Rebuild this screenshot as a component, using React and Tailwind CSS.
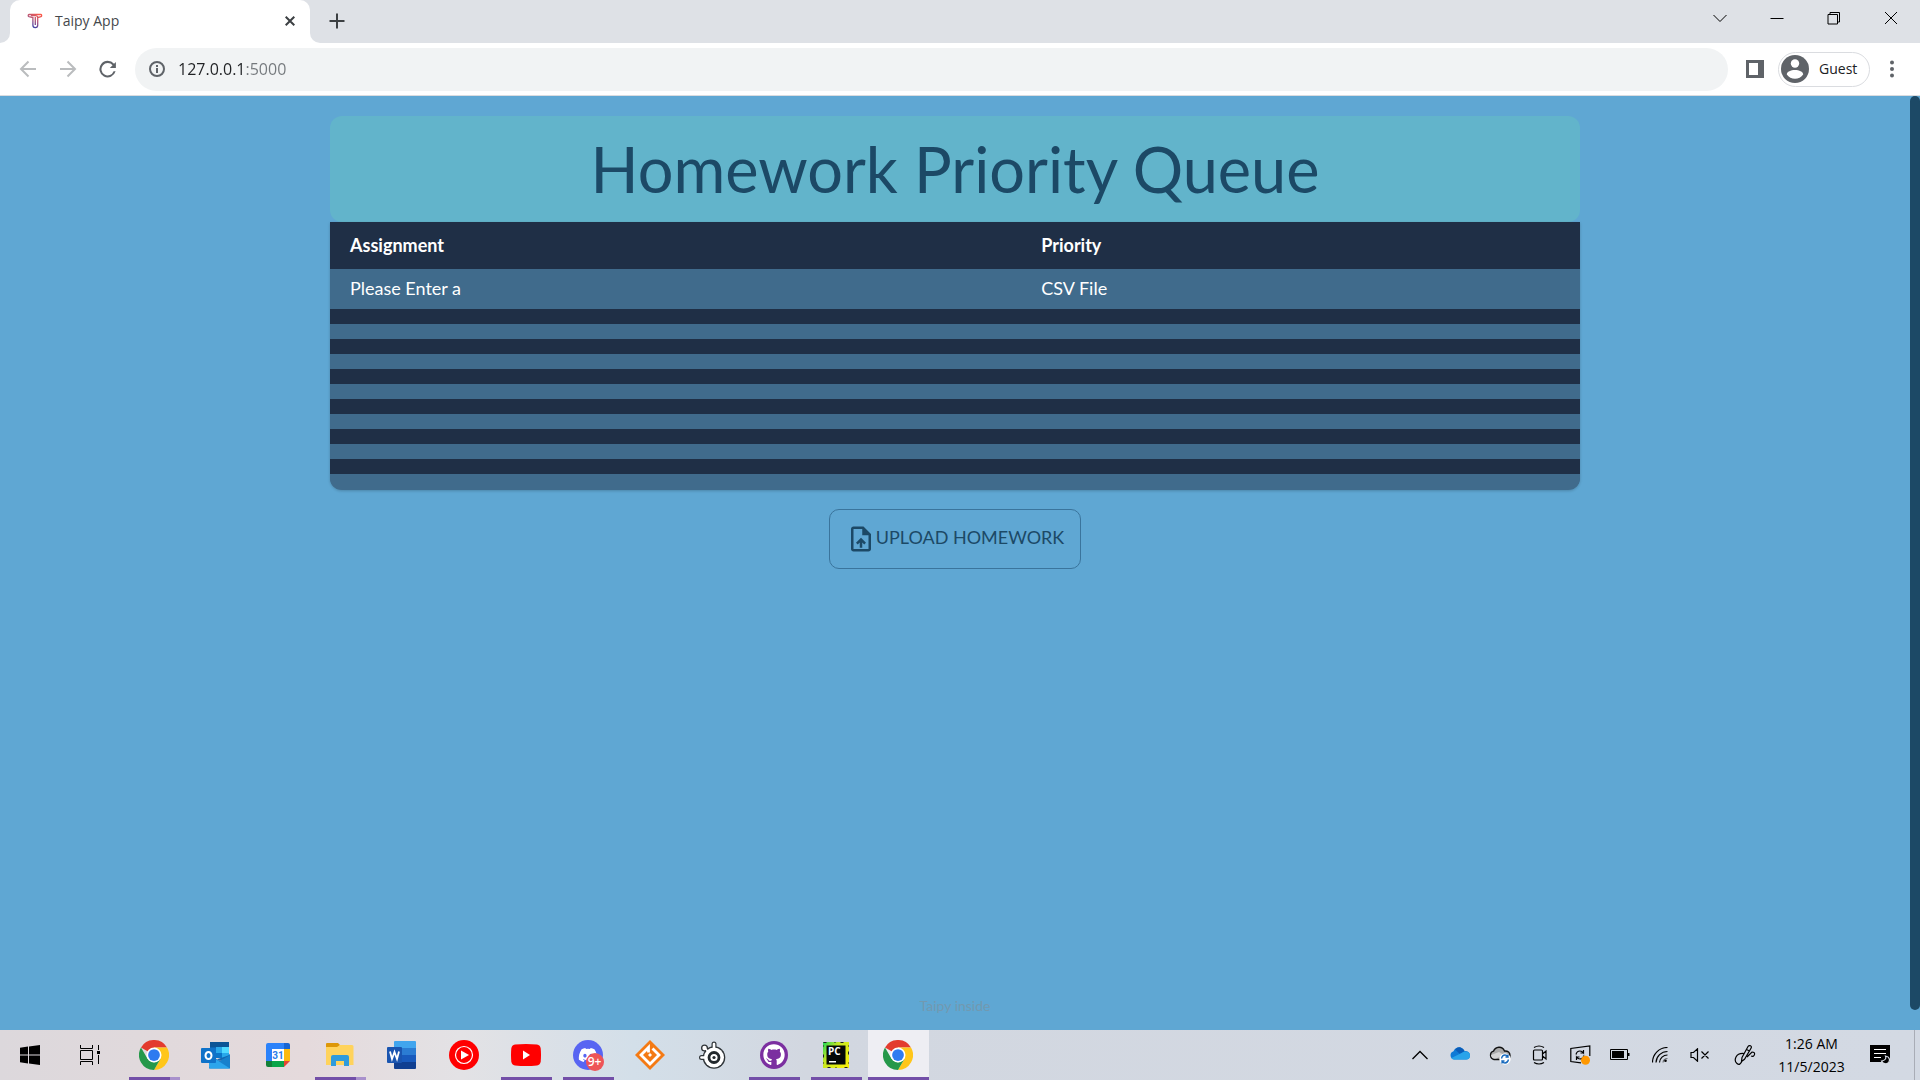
import React from "react";
import { FaGithub, FaDiscord } from "react-icons/fa";

/* ---------- browser icons ---------- */

const TaipyLogo = () => (
  <svg width="16" height="16" viewBox="0 0 16 16" fill="none">
    <defs>
      <linearGradient id="taipy" x1="13" y1="1" x2="5" y2="15" gradientUnits="userSpaceOnUse">
        <stop stopColor="#ff5a48" />
        <stop offset="0.5" stopColor="#b0557a" />
        <stop offset="1" stopColor="#283eb0" />
      </linearGradient>
    </defs>
    <path
      d="M2 1.500h12c.9 0 .9 2 0 2.200l-3.300.9v7.600c0 3.100-4.800 3.100-4.800 0V4.600L2 3.700c-1.100-.300-1-2.200 0-2.200Z"
      stroke="url(#taipy)"
      strokeWidth="1.300"
    />
    <path d="M8.300 4v8M4 2.700h4.500q2.200 0 2.200 2" stroke="url(#taipy)" strokeWidth="1.300" />
  </svg>
);

const Line = ({ size = 14, w = 1, d, className = "" }) => (
  <svg width={size} height={size} viewBox={`0 0 ${size} ${size}`} fill="none" stroke="currentColor" strokeWidth={w} className={className}>
    <path d={d} />
  </svg>
);

const Reload = () => (
  <svg width="22" height="22" viewBox="0 0 24 24" fill="#5f6368">
    <path d="M18.600 6.400A9 9 0 1 0 20.300 14.500h-2.200a6.800 6.800 0 1 1-1.100-6.500l-3 3h6.600V4.300z" />
  </svg>
);

const Info = () => (
  <svg width="18" height="18" viewBox="0 0 18 18" fill="none" stroke="#5f6368" strokeWidth="2">
    <circle cx="9" cy="9" r="7" />
    <path d="M9 8v5M9 5v2" />
  </svg>
);

const GuestAvatar = () => (
  <svg width="28" height="28" viewBox="0 0 28 28">
    <circle cx="14" cy="14" r="14" fill="#5f6368" />
    <circle cx="14" cy="8.500" r="4.200" fill="#fff" />
    <path d="M5.800 19.500c0-6 16.400-6 16.400 0-3.600 5.700-12.800 5.700-16.400 0Z" fill="#fff" />
  </svg>
);

const UploadFile = () => (
  <svg width="30" height="30" viewBox="0 0 24 24" fill="currentColor">
    <path d="M14 2H6c-1.100 0-1.990.9-1.990 2L4 20c0 1.100.890 2 1.990 2H18c1.100 0 2-.9 2-2V8l-6-6zm4 18H6V4h7v5h5v11zM8 15.010l1.410 1.410L11 14.840V19h2v-4.160l1.590 1.590L16 15.010 12.010 11z" />
  </svg>
);

/* ---------- taskbar icons ---------- */

const WindowsLogo = () => (
  <svg width="20" height="20" viewBox="0 0 20 20">
    <path d="M0 2.800 8 1.600V9.500H0zM9 1.400 20 0v9.500H9zM0 10.500h8v7.900L0 17.200zM9 10.500h11V20L9 18.600z" />
  </svg>
);

const TaskView = () => (
  <svg width="20" height="20" viewBox="0 0 20 20" fill="none" stroke="#000" strokeWidth="1">
    <path d="M.5 5.500h12v9H.5zM.5 0v3.500h12V0M.5 20v-3.500h12V20M18.500 0v5M18.500 10v9" />
    <path d="M17 6h3v3h-3z" fill="#000" stroke="none" />
  </svg>
);

const Chrome = () => (
  <svg width="30" height="30" viewBox="0 0 48 48">
    <path d="M24 24 3.200 12A24 24 0 0 1 44.800 12H24z" fill="#e33b2e" />
    <path d="M24 12h20.800A24 24 0 0 1 24 48L34.400 30z" fill="#ffc61a" />
    <path d="M3.200 12A24 24 0 0 0 24 48L34.400 30 24 36 13.600 30z" fill="#25984a" />
    <circle cx="24" cy="24" r="12" fill="#fff" />
    <circle cx="24" cy="24" r="9.400" fill="#2e7bf0" />
  </svg>
);

const Outlook = () => (
  <svg width="30" height="30" viewBox="0 0 30 30">
    <path d="M9 2h19v12H9z" fill="#0a64b4" />
    <path d="M9 2h19v5H9z" fill="#0b5496" />
    <path d="M15 7h6v6h-6z" fill="#28a8ea" />
    <path d="M21 7h7v6h-7z" fill="#50d9ff" />
    <path d="M15 13h6v5h-6z" fill="#0a74c8" />
    <path d="M21 13h7v4l-7 3z" fill="#28a8ea" />
    <path d="M29 14v14.500H8V15l11 6z" fill="#1780cc" />
    <path d="M8 15v12l1 1.500h20z" fill="#2ba5ec" />
    <path d="m29 15-10 6-3-1.700z" fill="#1266b0" />
    <rect y="8" width="15" height="15" rx="1" fill="#0f72c9" />
    <ellipse cx="7.500" cy="15.500" rx="3" ry="3.500" fill="none" stroke="#fff" strokeWidth="2" />
  </svg>
);

const Calendar = () => (
  <svg width="24" height="24" viewBox="0 0 24 24">
    <path d="M2 0h16v6H6v12H0V2Q0 0 2 0z" fill="#2b82fa" />
    <path d="M18 0h4q2 0 2 2v4h-6z" fill="#1765d3" />
    <path d="M18 6h6v12h-6z" fill="#fdba0c" />
    <path d="M6 18h12v6H6z" fill="#0aa549" />
    <path d="M0 18h6v6H2q-2 0-2-2z" fill="#138038" />
    <path d="M18 18h6l-6 6z" fill="#e64534" />
    <path d="M6 6h12v12H6z" fill="#fff" />
    <text x="12" y="15.500" textAnchor="middle" fontSize="10" fontWeight="700" fontFamily="Roboto, sans-serif" fill="#2b7de9">31</text>
  </svg>
);

const Explorer = () => (
  <svg width="28" height="24" viewBox="0 0 28 24">
    <path d="M0 1q0-1 1-1h11l2 2-2 3H0z" fill="#dd9708" />
    <path d="M0 4h11l3-2h12q1.500 0 1.500 1.500V22H0z" fill="#ffd35c" />
    <path d="M5 23V14q0-2 2-2h14q2 0 2 2v9h-5v-5h-8v5z" fill="#2f9bdc" />
  </svg>
);

const Word = () => (
  <svg width="30" height="28" viewBox="0 0 30 28">
    <path d="M7 7V1q0-1 1-1h20q1 0 1 1v6z" fill="#41a5ee" />
    <path d="M7 7h22v7H7z" fill="#2b7cd3" />
    <path d="M7 14h22v7H7z" fill="#185abd" />
    <path d="M7 21h22v6q0 1-1 1H8q-1 0-1-1z" fill="#103f91" />
    <rect y="6" width="15" height="16" rx="1" fill="#1a55b0" />
    <path d="m3 10.500 2 7.500 2.500-7 2.500 7 2-7.500" fill="none" stroke="#fff" strokeWidth="1.800" />
  </svg>
);

const YTMusic = () => (
  <svg width="30" height="30" viewBox="0 0 30 30">
    <circle cx="15" cy="15" r="15" fill="#f00" />
    <circle cx="15" cy="15" r="8.500" fill="none" stroke="#fff" strokeWidth="1.200" />
    <path d="m12 10.500 8 4.500-8 4.500z" fill="#fff" />
  </svg>
);

const YouTube = () => (
  <svg width="30" height="22" viewBox="0 0 30 22">
    <path d="M4 .6Q15-.4 26 .6q3.300.4 3.700 4 .6 6.400 0 12.800-.4 3.600-3.700 4-11 1-22 0-3.300-.4-3.700-4-.6-6.400 0-12.800Q.7 1 4 .6z" fill="#f00" />
    <path d="m12 6.500 7 4.500-7 4.500z" fill="#fff" />
  </svg>
);

const Discord = () => (
  <span className="relative flex h-[30px] w-[30px] items-center justify-center rounded-full bg-[#5865f2] text-white">
    <FaDiscord size={20} />
    <span className="absolute -right-px -bottom-px flex h-[18px] w-[18px] items-center justify-center rounded-full bg-[#ee5458] font-['Open_Sans',sans-serif] text-[12px] font-semibold">
      9+
    </span>
  </span>
);

const OrangeDiamond = () => (
  <svg width="30" height="30" viewBox="0 0 30 30" fill="none">
    <path d="M15 0 30 15 15 30 0 15z" fill="#f47a14" />
    <path d="M17.500 8.500 24 15 15 24 6 15 13.500 7.500v5" stroke="#fff" strokeWidth="2.800" />
    <path d="m15 13 2 2-2 2-2-2z" fill="#fff" />
  </svg>
);

const SteelSeries = () => (
  <svg width="28" height="28" viewBox="0 0 28 28">
    <g fill="#2f3438" stroke="#2f3438" strokeLinecap="round">
      <circle cx="16" cy="16.500" r="11.300" stroke="none" />
      <circle cx="6.500" cy="7" r="3.500" stroke="none" />
      <path d="M16 8V3" strokeWidth="5" />
      <path d="M7 16.500H3.500" strokeWidth="5" />
      <path d="m7 7 3 3.500" strokeWidth="4" />
    </g>
    <g fill="#fff" stroke="#fff" strokeLinecap="round">
      <circle cx="16" cy="16.500" r="10" stroke="none" />
      <circle cx="6.500" cy="7" r="2.200" stroke="none" />
      <path d="M16 8V3" strokeWidth="2.600" />
      <path d="M7 16.500H3.500" strokeWidth="2.600" />
      <path d="m7 7 3 3.500" strokeWidth="1.600" />
    </g>
    <circle cx="16" cy="16.500" r="5" fill="#fff" stroke="#22282c" strokeWidth="2.800" />
    <circle cx="16" cy="16.500" r="1.600" fill="#22282c" />
  </svg>
);

const GitHubDesktop = () => (
  <span className="flex h-7 w-7 items-center justify-center rounded-full bg-[#7b2fa0] text-white">
    <FaGithub size={22} />
  </span>
);

const PyCharm = () => (
  <svg width="26" height="26" viewBox="0 0 26 26">
    <defs>
      <linearGradient id="pc" x1="0" y1="0" x2="26" y2="20" gradientUnits="userSpaceOnUse">
        <stop stopColor="#19d65c" />
        <stop offset="0.400" stopColor="#c5e822" />
        <stop offset="1" stopColor="#f5ef10" />
      </linearGradient>
    </defs>
    <path d="M0 0h26v26H0z" fill="url(#pc)" />
    <path d="M.5.500h25v25H.5z" fill="none" stroke="#222" strokeDasharray="3 8 1 5" />
    <path d="M3.500 3.500h19v19h-19z" fill="#050807" />
    <path d="M6 19h7v1.500H6z" fill="#fff" />
    <text x="5" y="13" fontSize="10" fontWeight="700" fontFamily="Open Sans, sans-serif" fill="#fff">PC</text>
  </svg>
);

/* ---------- tray icons ---------- */

const Cloud = ({ gray }) => (
  <svg width="22" height="20" viewBox="0 0 22 20">
    <g stroke={gray ? "#111" : "none"} strokeWidth={gray ? 1.400 : 0}>
      <path d="M5 14.500a4.300 4.300 0 0 1-.5-8.300C6.500 1.500 13 .5 15.500 6c3.500-.2 5.500 1.500 5.500 4.500 0 2.500-1.500 4-4 4z" fill={gray ? "#aaa" : "#0f7ad6"} />
    </g>
    {gray ? (
      <path d="m10 7 5 3-8 3.500H5q-3-1-3-3.500z" fill="#d5d5d5" />
    ) : (
      <>
        <path d="M6 4.500q5-5 9.500 1.500L11 9z" fill="#0a5cb8" />
        <path d="M2.500 13 15.500 6.500q5.500 0 5.500 4t-4 4H5q-1.500 0-2.500-1.500z" fill="#29a3ea" />
      </>
    )}
    {gray && (
      <>
        <circle cx="16" cy="14" r="5.700" fill="#fff" />
        <path d="M12.500 13.500q.8-3.500 3.500-3.500 1.800 0 3 1.500v-2m0 2.500h-2.500M19.500 14.500q-.8 3.500-3.500 3.500-1.800 0-3-1.500v2m0-2.500h2.500" fill="none" stroke="#1669bd" strokeWidth="1.300" />
      </>
    )}
  </svg>
);

const MeetNow = () => (
  <svg width="16" height="20" viewBox="0 0 16 20" fill="none" stroke="#000" strokeWidth="1.200">
    <path d="M2.500 5h7q1 0 1 1v8q0 1-1 1h-7q-1 0-1-1V6q0-1 1-1zM10.500 9l3.500-3v8l-3.500-3M2 2.500q5-3 10 0M2 17.500q5 3 10 0" />
  </svg>
);

const Update = () => (
  <svg width="21" height="20" viewBox="0 0 21 20" fill="none" stroke="#000" strokeWidth="1.200">
    <path d="M11 17.800.8 16.500v-13l19-2.500v10" />
    <path d="M6 9.500q.8-3.500 4-3.500 2 0 3.500 2V5m0 3h-3M14 10.500q-.8 3.500-4 3.500-2 0-3.500-2v3m0-3h3" />
    <circle cx="15.500" cy="15.300" r="4.500" fill="#ff9800" stroke="none" />
  </svg>
);

const Battery = () => (
  <svg width="20" height="12" viewBox="0 0 20 12">
    <path d="M.5.500h17v10H.5z" fill="none" stroke="#000" />
    <path d="M2 2h12v7H2zM18 4h1.500v3H18z" />
  </svg>
);

const Wifi = () => (
  <svg width="16" height="16" viewBox="0 0 16 16" fill="none" stroke="#000" strokeWidth="1.200">
    <path d="M.5 15.500A15 15 0 0 1 15.500.5" />
    <path d="M4 15.500A11.500 11.500 0 0 1 15.500 4.500M7.500 15.500a8 8 0 0 1 8-7.500" />
    <path d="M11 15.500a4.500 4.500 0 0 1 4.500-4" opacity="0.500" />
    <circle cx="13.500" cy="13.700" r="1.300" fill="#000" stroke="none" />
  </svg>
);

const Muted = () => (
  <svg width="20" height="14" viewBox="0 0 20 14" fill="none" stroke="#000" strokeWidth="1.200">
    <path d="M1 4.500h2.500L7.500.8v12.400L3.500 9.500H1zM11.500 3.500l7 7M18.500 3.500l-7 7" />
  </svg>
);

const InkPen = () => (
  <svg width="22" height="22" viewBox="0 0 22 22" fill="none" stroke="#000" strokeWidth="1.200">
    <path d="m8 13.500 6-11q1-1.500 2.500-.7T17 4.300l-6.500 11L7.500 17.500zM10 9.500Q4 9 2 13t1 6.500Q6 22 8 17M13 13q4-4 5-5 3 0 2.500 2.500T17 12" />
    <path d="M12.500 5.500 15.500 7" />
  </svg>
);

const Notifications = () => (
  <svg width="21" height="21" viewBox="0 0 21 21">
    <path d="M0 0h20v17H0z" />
    <path d="M4 4.500h12M4 8.500h12M4 12.500h7" stroke="#fff" strokeWidth="1.100" />
    <path d="M15.500 11q1.500 4-4 5 1.300 3.200 4.800 2.800 4-1 3-5-.8-2.300-3.800-2.800z" stroke="#d4d9e2" fill="#000" strokeWidth="1.200" />
  </svg>
);

/* ---------- browser ---------- */

const winButtons = [
  ["Search tabs", "M.5 4 7 10.500 13.500 4"],
  ["Minimize", "M.5 7.500h13"],
  ["Restore", "M1 3.500h9.500V13H1zM3 3V1.500h9.500V11h-2"],
  ["Close", "m1 1 12 12M13 1 1 13"],
];

function TabStrip() {
  return (
    <header className="flex h-[43px] shrink-0 bg-[#dee1e6]">
      <div className="w-2.5 bg-white">
        <div className="h-full w-full rounded-br-[10px] bg-[#dee1e6]" />
      </div>
      <div className="flex w-[300px] items-center rounded-t-[10px] bg-white pr-3 pb-0.5 pl-[17px]">
        <TaipyLogo />
        <span className="ml-3 flex-1 text-[14px] text-[#45484c]">Taipy App</span>
        <button aria-label="Close tab" className="flex h-4 w-4 items-center justify-center text-[#3c4043]">
          <Line size={10} w={2} d="m.7.7 8.600 8.600M9.300.7.7 9.300" />
        </button>
      </div>
      <div className="w-2.5 bg-white">
        <div className="h-full w-full rounded-bl-[10px] bg-[#dee1e6]" />
      </div>
      <button aria-label="New tab" className="flex w-[34px] items-center justify-center pb-0.5 text-[#3c4043]">
        <Line size={16} w={2} d="M8 .5v15M.5 8h15" />
      </button>
      <div className="mr-px ml-auto flex h-9">
        {winButtons.map(([label, d]) => (
          <button key={label} aria-label={label} className="flex w-[57px] items-center justify-center text-black">
            <Line d={d} />
          </button>
        ))}
      </div>
    </header>
  );
}

function Toolbar() {
  return (
    <nav className="flex h-[53px] shrink-0 items-center border-b border-[#dadce0] bg-white pl-2">
      <button aria-label="Back" className="flex w-10 justify-center text-[#babcbe]">
        <Line size={18} w={2} d="M17 9H2M9.500 1.500 2 9l7.500 7.500" />
      </button>
      <button aria-label="Forward" className="flex w-10 justify-center text-[#babcbe]">
        <Line size={18} w={2} d="M1 9h15M8.500 1.500 16 9l-7.500 7.500" />
      </button>
      <button aria-label="Reload" className="flex w-10 justify-center">
        <Reload />
      </button>
      <label className="ml-[7px] flex h-[43px] flex-1 items-center gap-3 rounded-full bg-[#f1f3f4] pl-[13px]">
        <Info />
        <input
          aria-label="Address"
          defaultValue="127.0.0.1:5000"
          className="flex-1 bg-[linear-gradient(to_right,#202124_67px,#74787c_67px)] bg-clip-text text-[16px] text-transparent outline-none"
        />
      </label>
      <button aria-label="Side panel" className="ml-[18px] h-[18px] w-[18px] border-3 border-r-[6px] border-[#5f6368]" />
      <button className="ml-3.5 flex h-[35px] w-[92px] items-center gap-2.5 rounded-full border border-[#dadce0] pl-0.5 text-[14px] text-[#202124]">
        <GuestAvatar />
        <span className="pb-0.5">Guest</span>
      </button>
      <button aria-label="Menu" className="ml-2 flex w-[42px] justify-center pr-3.5">
        <svg width="4" height="18" viewBox="0 0 4 18" fill="#5f6368">
          <circle cx="2" cy="2.500" r="2" />
          <circle cx="2" cy="9" r="2" />
          <circle cx="2" cy="15.500" r="2" />
        </svg>
      </button>
    </nav>
  );
}

/* ---------- page ---------- */

const rows = [["Please Enter a", "CSV File"], ...Array.from({ length: 12 }, () => ["", ""])];

function Page() {
  return (
    <div className="flex min-h-0 flex-1 bg-[#5fa7d3] font-['Lato',sans-serif] text-[#1c4966]">
      <main className="flex flex-1 flex-col items-center px-5 pt-5">
        <div className="w-full max-w-[1250px]">
          <h1 className="flex h-[106px] items-center justify-center rounded-[12px] bg-[#62b4cb] text-[63px]">
            Homework Priority Queue
          </h1>
          <div className="overflow-hidden rounded-b-[12px] bg-[#406b8c] pb-px shadow-[0_1px_3px_rgba(0,0,0,0.2)]">
            <table className="w-full table-fixed text-left text-[18px] text-white">
              <thead>
                <tr className="h-[47px] bg-[#1f2f46]">
                  <th className="w-[55.3%] px-5 font-bold">Assignment</th>
                  <th className="px-5 font-bold">Priority</th>
                </tr>
              </thead>
              <tbody>
                {rows.map(([assignment, priority], i) => (
                  <tr key={i} className={`${i % 2 ? "bg-[#1f2f46]" : "bg-[#406b8c]"} ${assignment ? "h-10" : "h-[15px]"}`}>
                    <td className={assignment ? "px-5 pb-0.5" : ""}>{assignment}</td>
                    <td className={assignment ? "px-5 pb-0.5" : ""}>{priority}</td>
                  </tr>
                ))}
              </tbody>
            </table>
          </div>
        </div>
        <button className="mt-[19px] flex h-[60px] items-center rounded-[10px] border border-[#3a749c] px-4 text-[18px]">
          <UploadFile />
          <span className="pb-[3px]">UPLOAD HOMEWORK</span>
        </button>
        <a href="#taipy" className="mt-auto mb-3.5 text-[14px] text-[#7299b0]">
          Taipy inside
        </a>
      </main>
      <div className="w-2.5 pb-5">
        <div className="h-full rounded-full bg-[#1c4966]" />
      </div>
    </div>
  );
}

/* ---------- taskbar ---------- */

const apps = [
  ["Chrome", Chrome, "stack"],
  ["Outlook", Outlook, ""],
  ["Calendar", Calendar, ""],
  ["File Explorer", Explorer, "stack"],
  ["Word", Word, ""],
  ["YouTube Music", YTMusic, ""],
  ["YouTube", YouTube, "open"],
  ["Discord", Discord, "open"],
  ["Launcher", OrangeDiamond, ""],
  ["SteelSeries", SteelSeries, ""],
  ["GitHub Desktop", GitHubDesktop, "open"],
  ["PyCharm", PyCharm, "open"],
  ["Taipy App", Chrome, "active"],
];

const bars = {
  stack: "mx-[5px] border-r-[10px] border-[#a991cc] bg-[#734fa8]",
  open: "mx-[5px] bg-[#734fa8]",
  active: "bg-[#734fa8]",
};

const tray = [
  ["Show hidden icons", () => <Line size={16} w={1.3} d="M.5 12 8 4.500l7.500 7.500" />],
  ["OneDrive", () => <Cloud />],
  ["OneDrive sync", () => <Cloud gray />],
  ["Meet now", MeetNow],
  ["Updates", Update],
  ["Battery", Battery],
  ["Network", Wifi],
  ["Volume", Muted],
];

function Taskbar() {
  return (
    <footer className="flex h-[50px] shrink-0 bg-[linear-gradient(to_right,#dcd8dc,#e5dadc_16%,#e3e2e5_24%,#d3dfe9_33%,#d2d7e0_42%,#d3d9e3)] pr-[5px] text-black">
      <button aria-label="Start" className="flex w-[60px] items-center justify-center">
        <WindowsLogo />
      </button>
      <button aria-label="Task view" className="mr-1 flex w-[60px] items-center justify-center">
        <TaskView />
      </button>
      {apps.map(([label, Icon, state]) => (
        <button key={label} aria-label={label} className={`mr-px flex w-[61px] flex-col ${state === "active" ? "bg-[#eeeef3]" : ""}`}>
          <span className="flex w-full flex-1 items-center justify-center pt-[3px] pr-0.5">
            <Icon />
          </span>
          <span className={`h-[3px] self-stretch ${bars[state] || ""}`} />
        </button>
      ))}
      <div className="ml-auto flex">
        {tray.map(([label, Icon]) => (
          <button key={label} aria-label={label} className="flex w-10 items-center justify-center">
            <Icon />
          </button>
        ))}
        <button aria-label="Pen menu" className="flex w-[50px] items-center justify-center">
          <InkPen />
        </button>
        <button className="flex w-[83px] flex-col items-center justify-center text-[14px] leading-[23px]">
          <span>1:26 AM</span>
          <span>11/5/2023</span>
        </button>
        <button aria-label="Notifications" className="mr-1.5 flex w-[55px] items-center justify-center">
          <Notifications />
        </button>
        <div className="w-px bg-[#a9adb6]" />
      </div>
    </footer>
  );
}

export default function App() {
  return (
    <div className="flex h-screen flex-col overflow-hidden font-['Open_Sans',sans-serif]">
      <TabStrip />
      <Toolbar />
      <Page />
      <Taskbar />
    </div>
  );
}
